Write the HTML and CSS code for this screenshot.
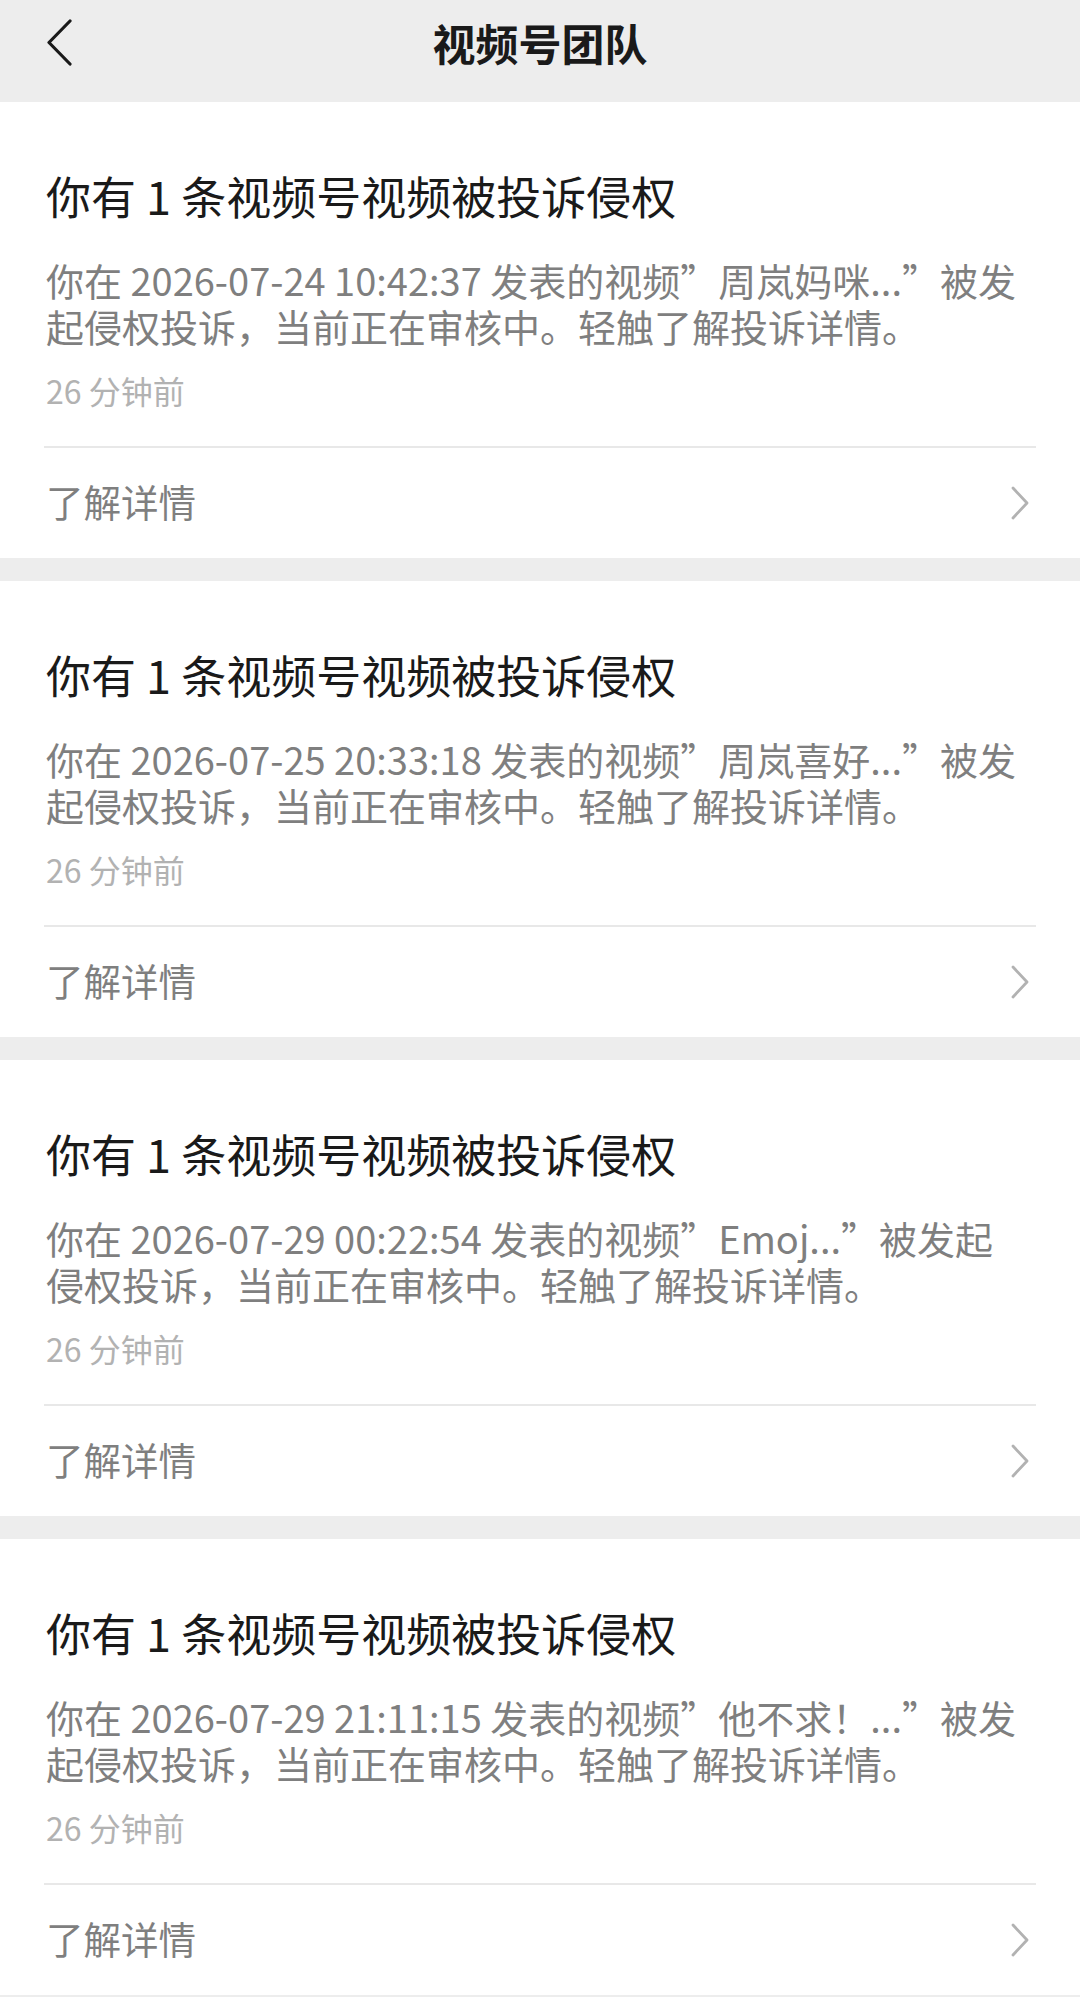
FILE: index.html
```html
<!DOCTYPE html>
<html lang="zh-CN">
<head>
<meta charset="utf-8">
<title>视频号团队</title>
<link rel="stylesheet" href="styles.css">
</head>
<body>
<div class="page">
  <header class="navbar">
    <svg class="back" width="30" height="48" viewBox="0 0 30 48"><polyline points="25,2 4,23.5 25,45" fill="none" stroke="#1a1a1a" stroke-width="3.2" stroke-linecap="round" stroke-linejoin="round"/></svg>
    <h1 class="nav-title">视频号团队</h1>
  </header>

  <main class="list">
    <section class="card">
      <div class="card-body">
        <h2 class="card-title">你有 1 条视频号视频被投诉侵权</h2>
        <p class="card-desc"><span class="line">你在 2026-07-24 10:42:37 发表的视频”周岚妈咪...”被发</span><span class="line">起侵权投诉，当前正在审核中。轻触了解投诉详情。</span></p>
        <div class="card-time">26 分钟前</div>
      </div>
      <div class="card-link">
        <span class="link-text">了解详情</span>
        <svg class="chev" width="20" height="34" viewBox="0 0 20 34"><polyline points="3,2 17,17 3,32" fill="none" stroke="#b2b2b2" stroke-width="2.8" stroke-linecap="round" stroke-linejoin="round"/></svg>
      </div>
    </section>

    <section class="card">
      <div class="card-body">
        <h2 class="card-title">你有 1 条视频号视频被投诉侵权</h2>
        <p class="card-desc"><span class="line">你在 2026-07-25 20:33:18 发表的视频”周岚喜好...”被发</span><span class="line">起侵权投诉，当前正在审核中。轻触了解投诉详情。</span></p>
        <div class="card-time">26 分钟前</div>
      </div>
      <div class="card-link">
        <span class="link-text">了解详情</span>
        <svg class="chev" width="20" height="34" viewBox="0 0 20 34"><polyline points="3,2 17,17 3,32" fill="none" stroke="#b2b2b2" stroke-width="2.8" stroke-linecap="round" stroke-linejoin="round"/></svg>
      </div>
    </section>

    <section class="card">
      <div class="card-body">
        <h2 class="card-title">你有 1 条视频号视频被投诉侵权</h2>
        <p class="card-desc"><span class="line">你在 2026-07-29 00:22:54 发表的视频”Emoj...”被发起</span><span class="line">侵权投诉，当前正在审核中。轻触了解投诉详情。</span></p>
        <div class="card-time">26 分钟前</div>
      </div>
      <div class="card-link">
        <span class="link-text">了解详情</span>
        <svg class="chev" width="20" height="34" viewBox="0 0 20 34"><polyline points="3,2 17,17 3,32" fill="none" stroke="#b2b2b2" stroke-width="2.8" stroke-linecap="round" stroke-linejoin="round"/></svg>
      </div>
    </section>

    <section class="card">
      <div class="card-body">
        <h2 class="card-title">你有 1 条视频号视频被投诉侵权</h2>
        <p class="card-desc"><span class="line">你在 2026-07-29 21:11:15 发表的视频”他不求！...”被发</span><span class="line">起侵权投诉，当前正在审核中。轻触了解投诉详情。</span></p>
        <div class="card-time">26 分钟前</div>
      </div>
      <div class="card-link">
        <span class="link-text">了解详情</span>
        <svg class="chev" width="20" height="34" viewBox="0 0 20 34"><polyline points="3,2 17,17 3,32" fill="none" stroke="#b2b2b2" stroke-width="2.8" stroke-linecap="round" stroke-linejoin="round"/></svg>
      </div>
    </section>
  </main>
</div>
</body>
</html>
```

FILE: styles.css
```css
html, body {
  margin: 0;
  padding: 0;
}

body {
  background: #ededed;
  font-family: "Noto Sans CJK SC", "Noto Sans", sans-serif;
  color: #1a1a1a;
}

.page {
  width: 1080px;
  min-height: 1997px;
  background: #ededed;
}

.navbar {
  position: relative;
  height: 102px;
  background: #ededed;
  display: flex;
  justify-content: center;
  align-items: flex-start;
}

.back {
  position: absolute;
  left: 45px;
  top: 19px;
}

.nav-title {
  margin: 0;
  padding-top: 12px;
  font-size: 43px;
  line-height: 60px;
  font-weight: 600;
  color: #1a1a1a;
}

.list {
  display: flex;
  flex-direction: column;
  gap: 23px;
}

.card {
  background: #ffffff;
  height: 456px;
  display: flex;
  flex-direction: column;
}

.card-body {
  height: 346px;
  box-sizing: border-box;
  margin: 0 44px;
  padding: 64px 0 0 2px;
  border-bottom: 2px solid #e8e8e8;
}

.card-title {
  margin: 0;
  font-size: 45px;
  line-height: 60px;
  font-weight: 400;
  color: #1a1a1a;
  white-space: nowrap;
}

.card-desc {
  margin: 31px 0 0;
  font-size: 38px;
  line-height: 46px;
  color: #7f7f7f;
  white-space: nowrap;
}

.card-desc .line {
  display: block;
}

.card-time {
  margin-top: 21px;
  font-size: 32px;
  line-height: 40px;
  color: #b2b2b2;
}

.card-link {
  flex: 1;
  display: flex;
  align-items: center;
  justify-content: space-between;
  padding: 0 50px 0 46px;
  font-size: 37.5px;
  color: #7f7f7f;
}

.link-text {
  padding-bottom: 5px;
}

.chev {
  display: block;
}
```
